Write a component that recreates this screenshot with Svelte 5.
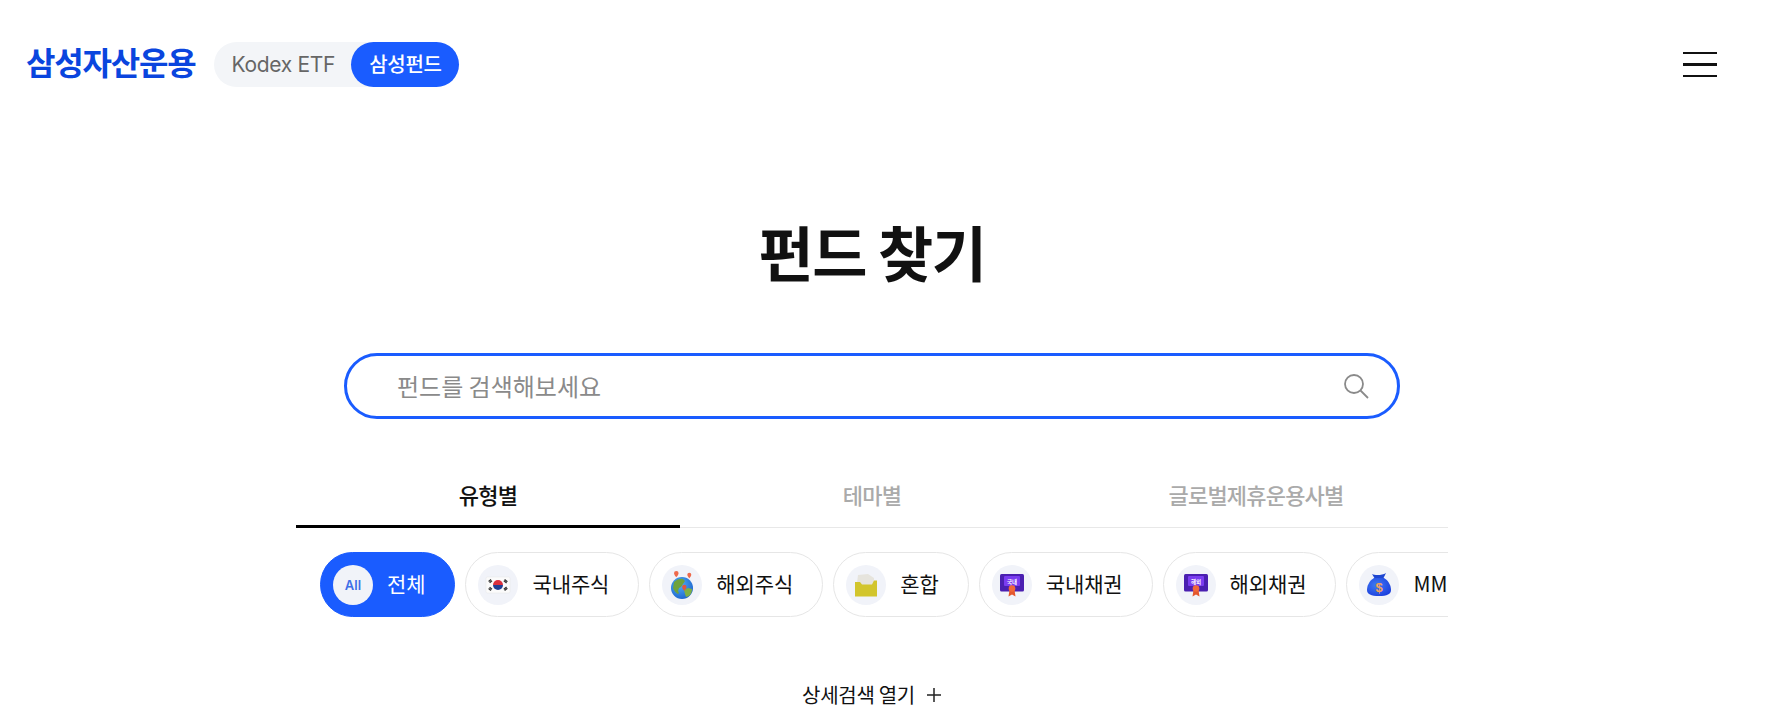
<script lang="ts">
	const tabs = ['유형별', '테마별', '글로벌제휴운용사별'];
	const chips = [
		{ key: 'all', label: '전체' },
		{ key: 'flag', label: '국내주식' },
		{ key: 'globe', label: '해외주식' },
		{ key: 'folder', label: '혼합' },
		{ key: 'kr-bond', label: '국내채권' },
		{ key: 'os-bond', label: '해외채권' },
		{ key: 'bag', label: 'MMF' }
	];
</script>

<div class="page">
	<header class="header">
		<div class="brand">
			<span class="logo">삼성자산운용</span>
			<div class="switch">
				<span class="switch-off">Kodex ETF</span>
				<span class="switch-on">삼성펀드</span>
			</div>
		</div>
		<button class="menu" aria-label="메뉴">
			<span></span>
			<span></span>
			<span></span>
		</button>
	</header>

	<main class="main">
		<h1 class="title">펀드 찾기</h1>

		<div class="search">
			<span class="placeholder">펀드를 검색해보세요</span>
			<svg class="search-icon" width="28" height="28" viewBox="0 0 28 28" fill="none" stroke="#8a8a8a" stroke-width="1.8">
				<circle cx="12" cy="12" r="9" />
				<path d="M18.5 18.5 L26 26" />
			</svg>
		</div>

		<div class="panel">
			<div class="tabs">
				{#each tabs as tab, i}
					<div class="tab" class:active={i === 0}>{tab}</div>
				{/each}
			</div>

			<div class="chips">
				{#each chips as chip}
					<div class="chip" class:selected={chip.key === 'all'}>
						<span class="chip-icon">
							{#if chip.key === 'all'}
								<span class="all">All</span>
							{:else if chip.key === 'flag'}
								<svg width="26" height="20" viewBox="0 0 26 20">
									<rect x="1" y="2" width="24" height="16" rx="1.5" fill="#fbfbfb" stroke="#e6e6e6" stroke-width="0.5" />
									<path d="M8 10a5 5 0 0 1 10 0z" fill="#d9303e" />
									<path d="M8 10a5 5 0 0 0 10 0z" fill="#1f3f94" />
									<g stroke="#333" stroke-width="1.3">
										<path d="M3.6 6.6 6 4.6M4.6 7.8 7 5.8" />
										<path d="M19.600 4.600 22.400 6.800M18.800 5.800 21.600 8" />
										<path d="M3.6 13.4 6 15.4M4.6 12.2 7 14.2" />
										<path d="M19.600 15.400 22.400 13.200M18.800 14.200 21.600 12" />
									</g>
								</svg>
							{:else if chip.key === 'globe'}
								<svg width="26" height="30" viewBox="0 0 26 30">
									<defs>
										<radialGradient id="sea" cx="0.4" cy="0.35" r="0.8">
											<stop offset="0" stop-color="#4fb0f6" />
											<stop offset="1" stop-color="#1658c8" />
										</radialGradient>
									</defs>
									<circle cx="13" cy="18" r="11" fill="url(#sea)" />
									<path d="M5 12c3-3 7-4 9-3l2 2-2 3-2 3-2 1-1 3 1 2-1 1c-2-1-4-3-5-6z" fill="#6fa23c" />
									<path d="M15 20l4-2 4 1c0 3-1 5-3 7l-3 1-1-3z" fill="#7fb043" />
									<path d="M7.300 1a2.300 2.300 0 0 1 2.300 2.300c0 1.800-2.300 3.900-2.300 3.900s-2.300-2.100-2.300-3.900a2.300 2.300 0 0 1 2.300-2.300z" fill="#ee6a4c" />
									<path d="M20.300 2.700a2 2 0 0 1 2 2c0 1.500-2 3.500-2 3.500s-2-2-2-3.500a2 2 0 0 1 2-2z" fill="#ee6a4c" />
									<path d="M15.300 14.700a2.200 2.200 0 0 1 2.200 2.200c0 1.700-2.200 3.800-2.200 3.800s-2.200-2.100-2.200-3.800a2.200 2.200 0 0 1 2.200-2.200z" fill="#e0583e" />
								</svg>
							{:else if chip.key === 'folder'}
								<svg width="24" height="24" viewBox="0 0 24 24">
									<path d="M3 10 4 2l10-1 6 4 0 8H3z" fill="#e6e4dd" />
									<path d="M1 9h5l2 2.500h10l2-4h3v16H1z" fill="#d2c52c" />
								</svg>
							{:else if chip.key === 'kr-bond' || chip.key === 'os-bond'}
								<svg width="26" height="24" viewBox="0 0 26 24">
									<rect x="1" y="1" width="24" height="17.500" rx="1.500" fill="#4a1fb0" />
									<rect x="5" y="3" width="16" height="10" rx="1" fill="#7a3cf0" />
									<text x="13" y="10.500" text-anchor="middle" class="cert-text">{chip.key === 'kr-bond' ? '국내' : '해외'}</text>
									<path d="M10.500 17 9.500 23.500 13 21.500 16.500 23.500 15.500 17z" fill="#e4572e" />
									<circle cx="13" cy="15.500" r="3.300" fill="#f0673a" />
								</svg>
							{:else}
								<svg width="26" height="24" viewBox="0 0 26 24">
									<defs>
										<radialGradient id="bag" cx="0.4" cy="0.4" r="0.8">
											<stop offset="0" stop-color="#3f7cf5" />
											<stop offset="1" stop-color="#1634d8" />
										</radialGradient>
									</defs>
									<path d="M6 1c3 1.500 10 1.500 14-1l-3 6h-8z" fill="#1e46d0" />
									<path d="M8 5h10c5 3 7 8 7 12 0 4-4 6-12 6S1 21 1 17c0-4 2-9 7-12z" fill="url(#bag)" />
									<text x="13" y="19" text-anchor="middle" class="bag-text">$</text>
								</svg>
							{/if}
						</span>
						<span class="chip-label">{chip.label}</span>
					</div>
				{/each}
			</div>
		</div>

		<button class="more">
			<span>상세검색 열기</span>
			<svg width="16" height="16" viewBox="0 0 16 16" stroke="#222" stroke-width="1.5">
				<path d="M8 1v14M1 8h14" />
			</svg>
		</button>
	</main>
</div>

<style>
	:global(body) {
		margin: 0;
		background: #fff;
	}

	.page {
		height: 728px;
		overflow: hidden;
		font-family: "Noto Sans CJK KR", "Noto Sans", sans-serif;
		color: #111;
	}

	.header {
		display: flex;
		justify-content: space-between;
		align-items: center;
		height: 45px;
		padding: 42px 48px 0 26px;
	}

	.brand {
		display: flex;
		align-items: center;
		gap: 19px;
	}

	.logo {
		padding-bottom: 6px;
		font-size: 32px;
		font-weight: 700;
		letter-spacing: -1.2px;
		color: #0a45de;
		line-height: 45px;
	}

	.switch {
		display: flex;
		align-items: center;
		width: 245px;
		height: 45px;
		border-radius: 23px;
		background: #f3f5f8;
		justify-content: space-between;
	}

	.switch-off {
		padding-left: 17px;
		font-family: "Inter", sans-serif;
		font-size: 21px;
		letter-spacing: -0.3px;
		color: #666;
	}

	.switch-on {
		display: flex;
		align-items: center;
		justify-content: center;
		box-sizing: border-box;
		width: 108px;
		height: 45px;
		padding-bottom: 2px;
		border-radius: 23px;
		background: #1a5cff;
		color: #fff;
		font-size: 20px;
		letter-spacing: -0.3px;
		font-weight: 500;
	}

	.menu {
		display: flex;
		flex-direction: column;
		gap: 9px;
		width: 34px;
		padding: 0;
		border: 0;
		background: none;
	}

	.menu span {
		height: 2.500px;
		background: #111;
	}

	.main {
		display: flex;
		flex-direction: column;
		align-items: center;
		padding: 125px 21px 0 0;
	}

	.title {
		margin: 0;
		font-size: 60px;
		line-height: 78px;
		font-weight: 700;
		letter-spacing: -1.500px;
		color: #111;
	}

	.search {
		display: flex;
		align-items: center;
		justify-content: space-between;
		box-sizing: border-box;
		width: 1056px;
		height: 66px;
		margin-top: 63px;
		padding: 0 27px 0 50px;
		border: 3px solid #1a5cff;
		border-radius: 33px;
	}

	.placeholder {
		padding-bottom: 2px;
		font-size: 24px;
		color: #8a8a8a;
	}

	.search-icon {
		display: block;
	}

	.panel {
		width: 1152px;
		margin-top: 49px;
	}

	.tabs {
		display: grid;
		grid-template-columns: repeat(3, 1fr);
		border-bottom: 1px solid #e8e8e8;
	}

	.tab {
		height: 60px;
		margin-bottom: -1px;
		box-sizing: border-box;
		padding-top: 10px;
		text-align: center;
		font-size: 22px;
		line-height: 32px;
		font-weight: 500;
		letter-spacing: -0.8px;
		color: #aaa;
	}

	.tab.active {
		color: #111;
		border-bottom: 3px solid #000;
	}

	.chips {
		display: flex;
		gap: 10px;
		padding: 24px 0 0 24px;
		overflow: hidden;
	}

	.chip {
		flex: none;
		display: flex;
		align-items: center;
		gap: 14px;
		box-sizing: border-box;
		height: 65px;
		padding: 0 29px 0 12px;
		border: 1px solid #e6e6e6;
		border-radius: 33px;
		background: #fff;
	}

	.chip.selected {
		background: #1a5cff;
		border-color: #1a5cff;
		color: #fff;
	}

	.chip-icon {
		flex: none;
		display: flex;
		align-items: center;
		justify-content: center;
		width: 40px;
		height: 40px;
		border-radius: 50%;
		background: #f1f3f9;
	}

	.all {
		font-family: "Inter", sans-serif;
		font-size: 13px;
		font-weight: 600;
		color: #3f6fe8;
	}

	.cert-text {
		font-size: 5.500px;
		font-weight: 700;
		fill: #fff;
	}

	.bag-text {
		font-family: "Liberation Sans", sans-serif;
		font-size: 13px;
		font-weight: 700;
		fill: #f4a259;
	}

	.chip-label {
		padding-bottom: 3px;
		font-size: 21px;
		letter-spacing: -0.1px;
		white-space: nowrap;
	}

	.more {
		display: flex;
		align-items: center;
		gap: 11px;
		margin-top: 63px;
		padding: 0;
		border: 0;
		background: none;
		font-family: inherit;
		font-size: 20px;
		letter-spacing: -0.3px;
		color: #111;
	}
</style>
